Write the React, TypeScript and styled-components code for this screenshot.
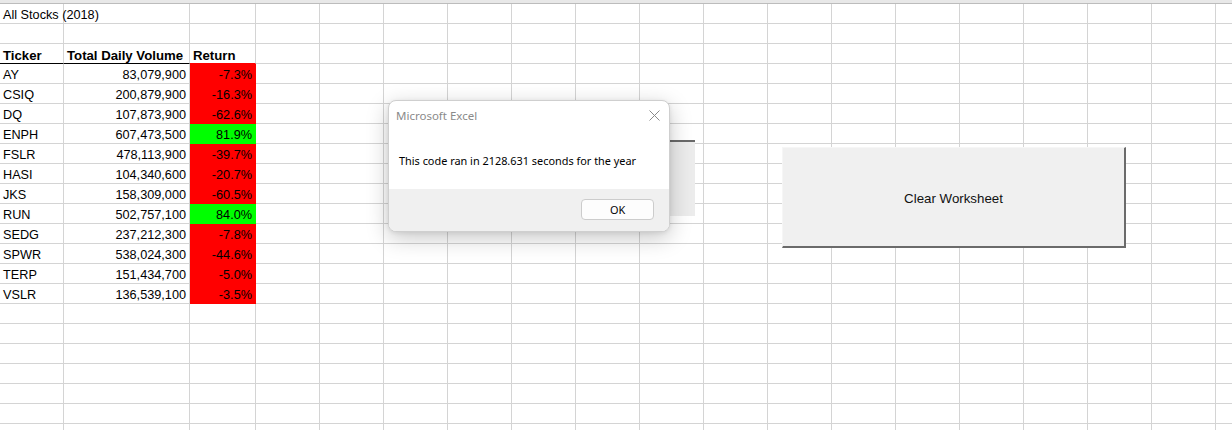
import React from "react";
import styled, { createGlobalStyle } from "styled-components";

const Global = createGlobalStyle`
  html, body { margin: 0; padding: 0; background: #ffffff; overflow: hidden; }
  body { width: 1232px; height: 430px; position: relative; }
`;

const Page = styled.div`
  position: relative;
  width: 1232px;
  height: 430px;
  overflow: hidden;
  font-family: "Liberation Sans", Arial, sans-serif;
`;

const HeaderStrip = styled.div`
  height: 3px;
  background: #e8e8e8;
  border-bottom: 1px solid #bcbcbc;
`;

const Row = styled.div`
  display: grid;
  grid-template-columns: 64px 126px 66px repeat(16, 64px);
  height: 20px;
`;

const Cell = styled.div<{
  $align?: "left" | "right";
  $bold?: boolean;
  $fill?: string;
  $under?: string;
}>`
  box-sizing: border-box;
  height: 20px;
  border-right: 1px solid ${(p) => p.$fill ?? "#d4d4d4"};
  border-bottom: 1px solid ${(p) => p.$under ?? p.$fill ?? "#d4d4d4"};
  background: ${(p) => p.$fill ?? "transparent"};
  font-size: ${(p) => (p.$bold ? "13.2px" : "12.7px")};
  line-height: 19px;
  padding: 2px 3px 0 3px;
  white-space: nowrap;
  overflow: visible;
  text-align: ${(p) => p.$align ?? "left"};
  font-weight: ${(p) => (p.$bold ? 700 : 400)};
  color: #000;
`;

const RED = "#ff0000";
const GREEN = "#00ff00";

const data: [string, string, string][] = [
  ["AY", "83,079,900", "-7.3%"],
  ["CSIQ", "200,879,900", "-16.3%"],
  ["DQ", "107,873,900", "-62.6%"],
  ["ENPH", "607,473,500", "81.9%"],
  ["FSLR", "478,113,900", "-39.7%"],
  ["HASI", "104,340,600", "-20.7%"],
  ["JKS", "158,309,000", "-60.5%"],
  ["RUN", "502,757,100", "84.0%"],
  ["SEDG", "237,212,300", "-7.8%"],
  ["SPWR", "538,024,300", "-44.6%"],
  ["TERP", "151,434,700", "-5.0%"],
  ["VSLR", "136,539,100", "-3.5%"],
];

const EMPTY_COLS = 16;
const TOTAL_ROWS = 22;

const Blanks = ({ n }: { n: number }) => (
  <>
    {Array.from({ length: n }).map((_, i) => (
      <Cell key={i} />
    ))}
  </>
);

const Dialog = styled.div`
  position: absolute;
  left: 388px;
  top: 100px;
  width: 282px;
  height: 132px;
  box-sizing: border-box;
  background: #ffffff;
  border: 1px solid #cfcfcf;
  border-radius: 8px;
  box-shadow: 0 6px 22px rgba(0, 0, 0, 0.22), 0 1px 4px rgba(0, 0, 0, 0.08);
  display: flex;
  flex-direction: column;
  overflow: hidden;
  font-family: "Noto Sans", "Open Sans", sans-serif;
  z-index: 3;
`;

const TitleBar = styled.div`
  height: 28px;
  display: flex;
  align-items: center;
  justify-content: space-between;
  padding: 0 9px 0 7px;
  font-size: 11.5px;
  color: #8a8a8a;
`;

const Message = styled.div`
  flex: 1;
  display: flex;
  align-items: center;
  padding: 2px 10px 0 10px;
  font-size: 10.9px;
  color: #000;
`;

const Footer = styled.div`
  height: 42px;
  background: #f0f0f0;
  display: flex;
  justify-content: flex-end;
  align-items: flex-start;
  padding: 10px 15px 0 0;
  box-sizing: border-box;
`;

const OkButton = styled.button`
  width: 73px;
  height: 21px;
  box-sizing: border-box;
  border: 1px solid #cccccc;
  border-radius: 4px;
  background: #fdfdfd;
  font-family: "Noto Sans", "Open Sans", sans-serif;
  font-size: 10.9px;
  color: #000;
  padding: 0;
  line-height: 18px;
`;

const BehindButton = styled.div`
  position: absolute;
  left: 430px;
  top: 140px;
  width: 265px;
  height: 76px;
  box-sizing: border-box;
  background: #ececec;
  border-top: 2px solid #6a6a6a;
  z-index: 2;
`;

const ClearButton = styled.div`
  position: absolute;
  left: 782px;
  top: 147px;
  width: 344px;
  height: 101px;
  box-sizing: border-box;
  background: #f0f0f0;
  border-top: 1px solid #f6f6f6;
  border-left: 1px solid #f6f6f6;
  border-right: 2px solid #6b6b6b;
  border-bottom: 2px solid #6b6b6b;
  display: flex;
  align-items: center;
  justify-content: center;
  font-family: "Liberation Sans", Arial, sans-serif;
  font-size: 13.3px;
  color: #111;
  padding-top: 2px;
  z-index: 2;
`;

const CloseIcon = () => (
  <svg width="11" height="11" viewBox="0 0 11 11">
    <path d="M0.5 0.5 L10.5 10.5 M10.5 0.5 L0.5 10.5" stroke="#8a8a8a" strokeWidth="1" fill="none" />
  </svg>
);

export default function App() {
  const rows: React.ReactNode[] = [];
  rows.push(
    <Row key="r1">
      <Cell>All Stocks (2018)</Cell>
      <Cell />
      <Cell />
      <Blanks n={EMPTY_COLS} />
    </Row>
  );
  rows.push(
    <Row key="r2">
      <Cell />
      <Cell />
      <Cell />
      <Blanks n={EMPTY_COLS} />
    </Row>
  );
  rows.push(
    <Row key="r3">
      <Cell $bold $under="#000">Ticker</Cell>
      <Cell $bold $under="#000">Total Daily Volume</Cell>
      <Cell $bold $under={RED}>Return</Cell>
      <Blanks n={EMPTY_COLS} />
    </Row>
  );
  data.forEach(([t, v, r]) => {
    const fill = r.startsWith("-") ? RED : GREEN;
    rows.push(
      <Row key={t}>
        <Cell>{t}</Cell>
        <Cell $align="right">{v}</Cell>
        <Cell $align="right" $fill={fill}>{r}</Cell>
        <Blanks n={EMPTY_COLS} />
      </Row>
    );
  });
  for (let i = rows.length; i < TOTAL_ROWS; i++) {
    rows.push(
      <Row key={`e${i}`}>
        <Cell />
        <Cell />
        <Cell />
        <Blanks n={EMPTY_COLS} />
      </Row>
    );
  }

  return (
    <Page>
      <Global />
      <HeaderStrip />
      {rows}
      <BehindButton />
      <ClearButton>Clear Worksheet</ClearButton>
      <Dialog>
        <TitleBar>
          <span>Microsoft Excel</span>
          <CloseIcon />
        </TitleBar>
        <Message>This code ran in 2128.631 seconds for the year</Message>
        <Footer>
          <OkButton>OK</OkButton>
        </Footer>
      </Dialog>
    </Page>
  );
}
